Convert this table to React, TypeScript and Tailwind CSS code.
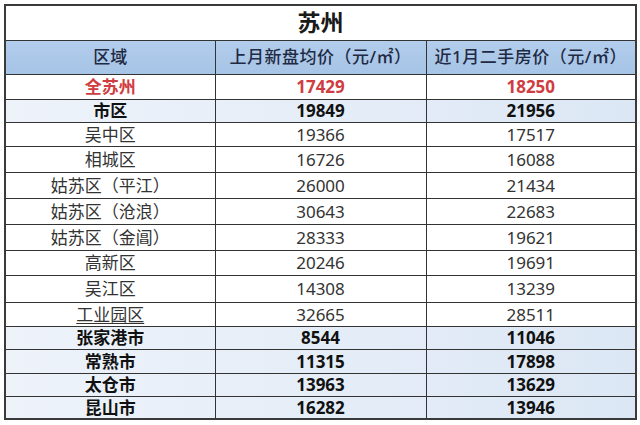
const rows: { name: string; a: string; b: string; kind: "red" | "bold" | "normal" ; h: string }[] = [
  { name: "全苏州", a: "17429", b: "18250", kind: "red", h: "h-[25px]" },
  { name: "市区", a: "19849", b: "21956", kind: "bold", h: "h-[23px]" },
  { name: "吴中区", a: "19366", b: "17517", kind: "normal", h: "h-[24px]" },
  { name: "相城区", a: "16726", b: "16088", kind: "normal", h: "h-[26px]" },
  { name: "姑苏区（平江）", a: "26000", b: "21434", kind: "normal", h: "h-[26px]" },
  { name: "姑苏区（沧浪）", a: "30643", b: "22683", kind: "normal", h: "h-[26px]" },
  { name: "姑苏区（金阊）", a: "28333", b: "19621", kind: "normal", h: "h-[26px]" },
  { name: "高新区", a: "20246", b: "19691", kind: "normal", h: "h-[25px]" },
  { name: "吴江区", a: "14308", b: "13239", kind: "normal", h: "h-[27px]" },
  { name: "工业园区", a: "32665", b: "28511", kind: "normal", h: "h-[24px]" },
  { name: "张家港市", a: "8544", b: "11046", kind: "bold", h: "h-[23px]" },
  { name: "常熟市", a: "11315", b: "17898", kind: "bold", h: "h-[24px]" },
  { name: "太仓市", a: "13963", b: "13629", kind: "bold", h: "h-[23px]" },
  { name: "昆山市", a: "16282", b: "13946", kind: "bold", h: "h-[23px]" },
]

export default function App() {
  return (
    <div className="w-[640px] h-[425px] bg-white pt-[4px] pl-[4px] font-['Noto_Sans','Noto_Sans_CJK_SC',sans-serif]">
      <table className="w-[631px] border-collapse table-fixed border-2 border-[#3a3a3a]">
        <colgroup>
          <col className="w-[210px]" />
          <col className="w-[211px]" />
          <col className="w-[210px]" />
        </colgroup>
        <thead>
          <tr className="h-[35px]">
            <th colSpan={3} className="bg-white text-center text-[23px] font-bold text-[#1a1a1a] leading-none">
              苏州
            </th>
          </tr>
          <tr className="h-[34px] bg-gradient-to-b from-[#b3cdec] to-[#a6c4e6]">
            <th className="border border-[#333] text-[17px] font-medium text-[#1f2a44]">区域</th>
            <th className="border border-[#333] text-[17px] font-medium text-[#1f2a44] whitespace-nowrap tracking-[0.5px]">
              上月新盘均价（元/㎡）
            </th>
            <th className="border border-[#333] text-[17px] font-medium text-[#1f2a44] whitespace-nowrap tracking-[0.5px]">
              近1月二手房价（元/㎡）
            </th>
          </tr>
        </thead>
        <tbody>
          {rows.map((r) => {
            const bg =
              r.kind === "bold"
                ? "bg-gradient-to-r from-[#eef3fa] to-[#dce7f5]"
                : "bg-white"
            const text =
              r.kind === "red"
                ? "text-[#cf3d42] font-bold"
                : r.kind === "bold"
                ? "text-[#111] font-bold"
                : "text-[#333] font-normal"
            return (
              <tr key={r.name} className={`${r.h} ${bg}`}>
                <td className={`border border-[#333] text-center text-[17px] leading-none ${text}`}>
                  <span className={r.name === "工业园区" ? "underline underline-offset-2" : ""}>{r.name}</span>
                </td>
                <td className={`border border-[#333] text-center text-[17px] leading-none ${text}`}>{r.a}</td>
                <td className={`border border-[#333] text-center text-[17px] leading-none ${text}`}>{r.b}</td>
              </tr>
            )
          })}
        </tbody>
      </table>
    </div>
  )
}
